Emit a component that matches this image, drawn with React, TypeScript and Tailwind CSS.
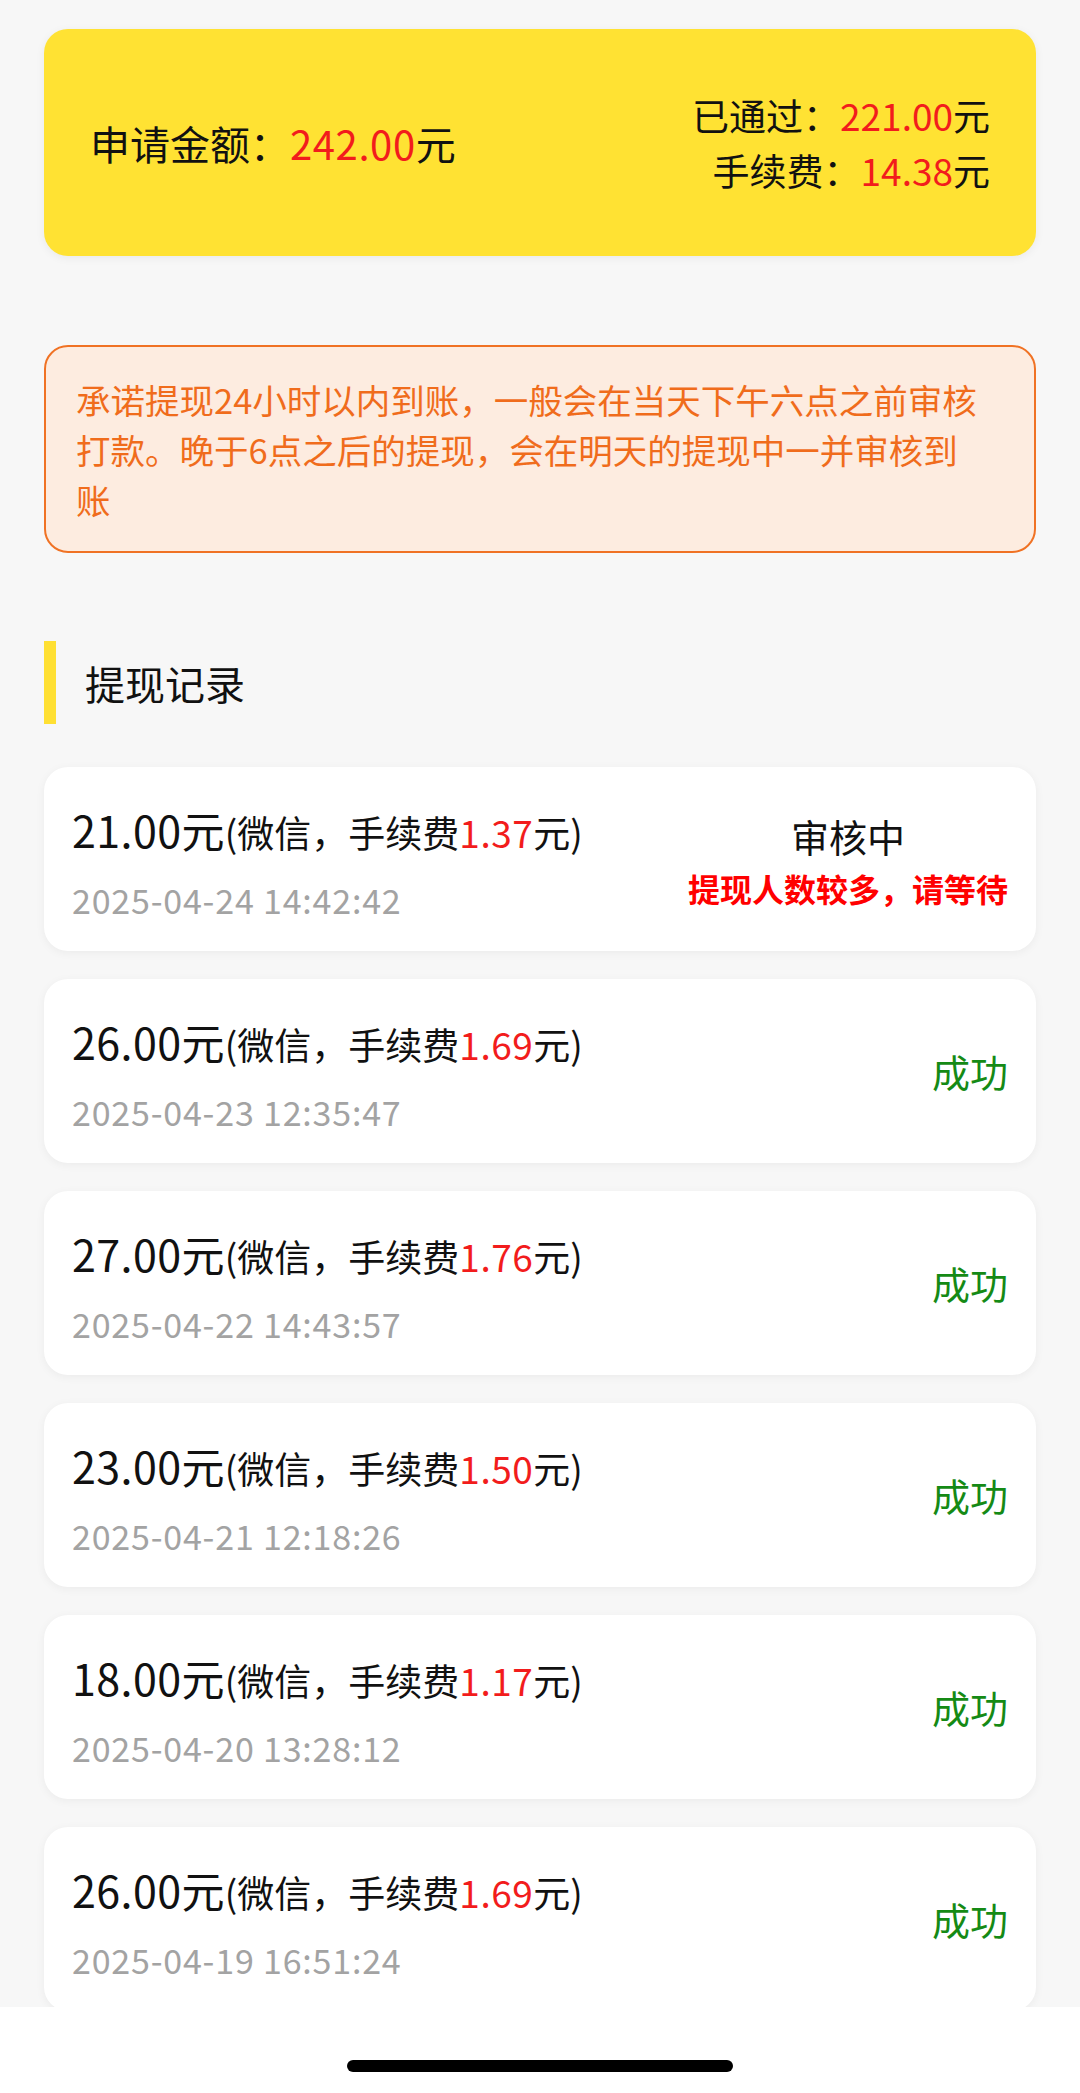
const records = [
  { amount: "21.00", fee: "1.37", time: "2025-04-24 14:42:42", pending: true },
  { amount: "26.00", fee: "1.69", time: "2025-04-23 12:35:47", pending: false },
  { amount: "27.00", fee: "1.76", time: "2025-04-22 14:43:57", pending: false },
  { amount: "23.00", fee: "1.50", time: "2025-04-21 12:18:26", pending: false },
  { amount: "18.00", fee: "1.17", time: "2025-04-20 13:28:12", pending: false },
  { amount: "26.00", fee: "1.69", time: "2025-04-19 16:51:24", pending: false },
];

function RecordCard({ r }: { r: (typeof records)[number] }) {
  return (
    <div className="flex h-[184px] shrink-0 items-center justify-between rounded-[24px] bg-white pl-[28px] pr-[28px] shadow-[0_2px_10px_rgba(0,0,0,0.05)]">
      <div className="flex flex-col self-stretch pt-[41px]">
        <div className="h-[42px] whitespace-nowrap leading-[42px] text-[#111]">
          <span className="text-[43px] tracking-[0.4px]">{r.amount}元</span>
          <span className="text-[37px]">
            (微信，手续费<span className="tracking-[0.5px] text-[#f21c1c]">{r.fee}</span>元)
          </span>
        </div>
        <div className="mt-[32px] h-[36px] whitespace-nowrap text-[34px] leading-[36px] tracking-[0.8px] text-[#a3a3a3]">
          {r.time}
        </div>
      </div>
      {r.pending ? (
        <div className="flex flex-col items-center pt-[6px]">
          <div className="text-[38px] leading-[53px] text-[#111]">审核中</div>
          <div className="text-[32px] font-bold leading-[53px] text-[#f00]">提现人数较多，请等待</div>
        </div>
      ) : (
        <div className="text-[38px] leading-[50px] text-[#158a15]">成功</div>
      )}
    </div>
  );
}

export default function App() {
  return (
    <div className="flex h-[2093px] w-[1080px] flex-col overflow-hidden bg-[#f7f7f7] font-['Noto_Sans_CJK_SC','Noto_Sans',sans-serif]">
      <div className="flex-1 overflow-hidden px-[44px] pt-[29px]">
        <div className="flex h-[227px] items-center justify-between rounded-[24px] bg-[#ffe233] pl-[46px] pr-[46px] shadow-[0_2px_10px_rgba(0,0,0,0.06)]">
          <div className="whitespace-nowrap text-[40px] text-[#111]">
            申请金额：<span className="tracking-[0.6px] text-[#f21c1c]">242.00</span>元
          </div>
          <div className="text-right text-[37px] leading-[55px] text-[#111]">
            <div className="whitespace-nowrap">
              已通过：<span className="text-[#f21c1c]">221.00</span>元
            </div>
            <div className="whitespace-nowrap">
              手续费：<span className="text-[#f21c1c]">14.38</span>元
            </div>
          </div>
        </div>

        <div className="mt-[89px] rounded-[24px] border-2 border-[#f07224] bg-[#fdece0] px-[30px] py-[27px] text-[34.5px] leading-[50px] text-[#f06c1c]">
          <div className="whitespace-nowrap">承诺提现24小时以内到账，一般会在当天下午六点之前审核</div>
          <div className="whitespace-nowrap">打款。晚于6点之后的提现，会在明天的提现中一并审核到</div>
          <div className="whitespace-nowrap">账</div>
        </div>

        <div className="mt-[88px] flex items-center gap-[29px]">
          <div className="h-[83px] w-[12px] bg-[#ffe033]" />
          <div className="text-[40px] text-[#111]">提现记录</div>
        </div>

        <div className="mt-[43px] flex flex-col gap-[28px]">
          {records.map((r, i) => (
            <RecordCard key={i} r={r} />
          ))}
        </div>
      </div>
      <div className="flex h-[86px] shrink-0 justify-center bg-white pt-[53px]">
        <div className="h-[12px] w-[386px] rounded-full bg-black" />
      </div>
    </div>
  );
}
